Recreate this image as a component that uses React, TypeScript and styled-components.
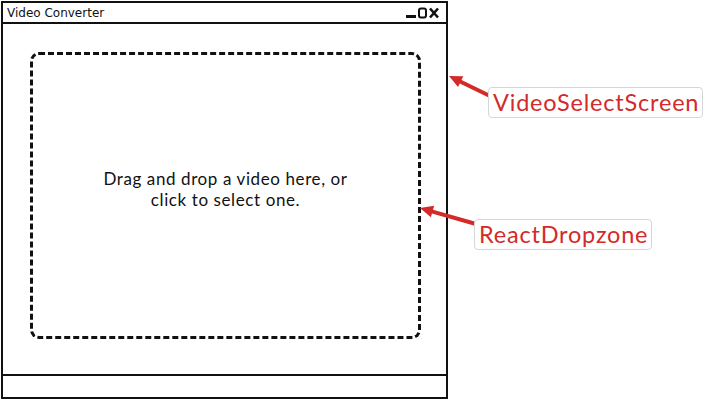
import styled, { createGlobalStyle } from "styled-components";

const GlobalStyle = createGlobalStyle`
  html, body {
    margin: 0;
    padding: 0;
    background: #ffffff;
  }
  body {
    font-family: "Liberation Sans", Arial, sans-serif;
  }
`;

const Canvas = styled.div`
  position: relative;
  width: 704px;
  height: 400px;
  overflow: hidden;
  background: #ffffff;
`;

const Window = styled.div`
  position: absolute;
  top: 1px;
  left: 1px;
  width: 447px;
  height: 398px;
  box-sizing: border-box;
  border: 2px solid #111;
  display: flex;
  flex-direction: column;
  background: #fff;
`;

const TitleBar = styled.div`
  display: flex;
  align-items: center;
  justify-content: space-between;
  height: 19px;
  padding: 0 6px 0 4px;
  border-bottom: 2px solid #111;
  font-family: "DejaVu Sans", sans-serif;
  font-size: 12px;
  color: #111;
`;

const Controls = styled.div`
  display: flex;
  align-items: center;
  gap: 2px;
`;

const Body = styled.div`
  flex: 1;
  padding: 28px 25px 35px 27px;
  display: flex;
`;

const Dropzone = styled.div`
  flex: 1;
  display: flex;
  align-items: center;
  justify-content: center;
  text-align: center;
  padding-bottom: 13px;
  border: 3px dashed #111;
  border-radius: 9px;
  font-family: "Lato", sans-serif;
  font-size: 17px;
  letter-spacing: 0.6px;
  line-height: 21px;
  color: #111;
`;

const StatusBar = styled.div`
  height: 21px;
  border-top: 2px solid #111;
`;

const Callout = styled.div<{ $top: number; $left: number }>`
  position: absolute;
  top: ${(p) => p.$top}px;
  left: ${(p) => p.$left}px;
  padding: 2px 3px 2px 4px;
  border: 1px solid #d6d6d6;
  border-radius: 4px;
  background: #fff;
  color: #d42a2a;
  font-family: "Lato", sans-serif;
  font-size: 23.5px;
  letter-spacing: 0.8px;
  line-height: 25px;
`;

const Arrows = styled.svg`
  position: absolute;
  inset: 0;
  pointer-events: none;
`;

function Arrow({ x1, y1, x2, y2 }: { x1: number; y1: number; x2: number; y2: number }) {
  const a = Math.atan2(y2 - y1, x2 - x1);
  const len = 13;
  const w = 6;
  const bx = x2 - len * Math.cos(a);
  const by = y2 - len * Math.sin(a);
  const px = -Math.sin(a) * w;
  const py = Math.cos(a) * w;
  return (
    <g>
      <line x1={x1} y1={y1} x2={bx} y2={by} stroke="#d42a2a" strokeWidth={4} strokeLinecap="round" />
      <polygon points={`${x2},${y2} ${bx + px},${by + py} ${bx - px},${by - py}`} fill="#d42a2a" />
    </g>
  );
}

export default function App() {
  return (
    <>
      <GlobalStyle />
      <Canvas>
        <Window>
          <TitleBar>
            <span>Video Converter</span>
            <Controls>
              <svg width="34" height="12" viewBox="0 0 34 12">
                <rect x="0" y="8" width="10" height="3" fill="#111" />
                <rect x="13" y="1.5" width="7" height="9" rx="2" fill="none" stroke="#111" strokeWidth="2" />
                <path d="M24 1.5 L32 10.5 M32 1.5 L24 10.5" stroke="#111" strokeWidth="2.6" />
              </svg>
            </Controls>
          </TitleBar>
          <Body>
            <Dropzone>
              Drag and drop a video here, or
              <br />
              click to select one.
            </Dropzone>
          </Body>
          <StatusBar />
        </Window>
        <Arrows width="704" height="400">
          <Arrow x1={490} y1={96} x2={449} y2={76} />
          <Arrow x1={476} y1={224} x2={420} y2={208} />
        </Arrows>
        <Callout $top={87} $left={488}>VideoSelectScreen</Callout>
        <Callout $top={219} $left={474}>ReactDropzone</Callout>
      </Canvas>
    </>
  );
}
